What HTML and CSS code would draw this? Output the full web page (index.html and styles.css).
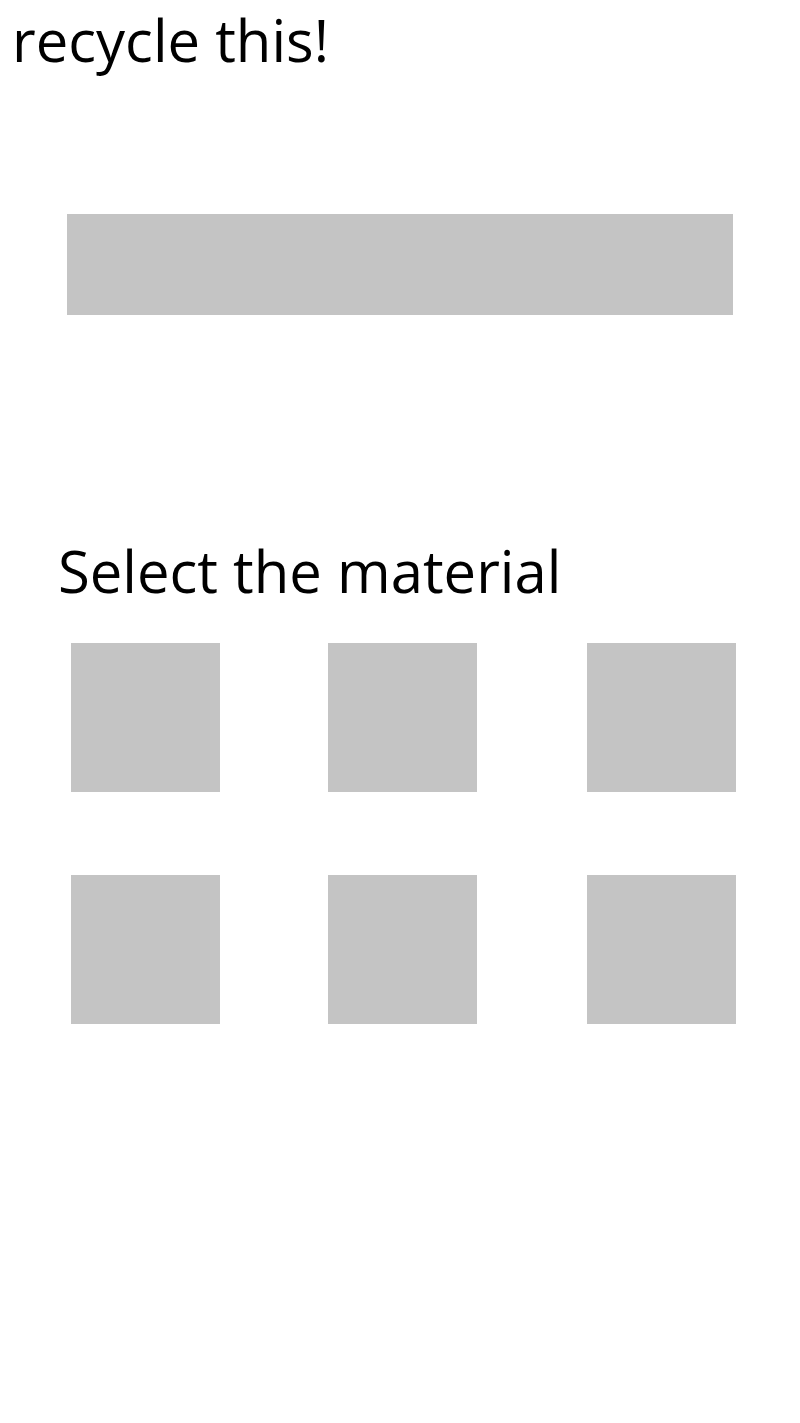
FILE: index.html
```html
<!DOCTYPE html>
<html lang="en">
<head>
<meta charset="utf-8">
<title>recycle this!</title>
<link rel="stylesheet" href="styles.css">
</head>
<body>
  <main class="page">
    <h1 class="app-title">recycle this!</h1>
    <div class="banner"></div>
    <section class="materials">
      <h2 class="materials-title">Select the material</h2>
      <div class="material-grid">
        <button class="material" type="button"></button>
        <button class="material" type="button"></button>
        <button class="material" type="button"></button>
        <button class="material" type="button"></button>
        <button class="material" type="button"></button>
        <button class="material" type="button"></button>
      </div>
    </section>
  </main>
</body>
</html>
```

FILE: styles.css
```css
html, body {
  margin: 0;
  padding: 0;
  background: #fff;
}

body {
  font-family: "Open Sans", "Noto Sans", sans-serif;
  color: #000;
}

.page {
  display: flex;
  flex-direction: column;
  min-height: 1423px;
}

.app-title {
  margin: 0 0 0 12px;
  font-size: 58px;
  font-weight: 400;
  line-height: normal;
}

.banner {
  margin: 135px 0 0 67px;
  width: 666px;
  height: 101px;
  background: #c4c4c4;
}

.materials {
  margin-top: 216px;
}

.materials-title {
  margin: 0 0 0 58px;
  font-size: 58px;
  font-weight: 400;
  line-height: normal;
}

.material-grid {
  display: grid;
  grid-template-columns: repeat(3, 149px);
  column-gap: 108px;
  row-gap: 83px;
  margin: 33px 0 0 71px;
}

.material {
  width: 149px;
  height: 149px;
  padding: 0;
  border: 0;
  background: #c4c4c4;
  cursor: pointer;
}

.material:nth-child(3n) {
  margin-left: 2px;
}
```
